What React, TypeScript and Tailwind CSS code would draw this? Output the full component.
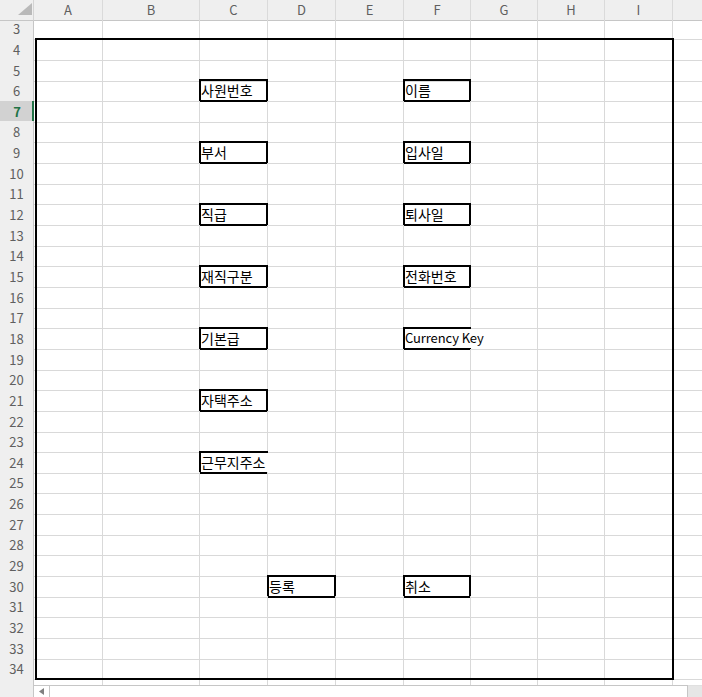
const COLS = ['A', 'B', 'C', 'D', 'E', 'F', 'G', 'H', 'I', 'J']

const LABELS: Record<string, { text: string; open?: boolean; latin?: boolean }> = {
  '6-C': { text: '사원번호' },
  '6-F': { text: '이름' },
  '9-C': { text: '부서' },
  '9-F': { text: '입사일' },
  '12-C': { text: '직급' },
  '12-F': { text: '퇴사일' },
  '15-C': { text: '재직구분' },
  '15-F': { text: '전화번호' },
  '18-C': { text: '기본급' },
  '18-F': { text: 'Currency Key', open: true, latin: true },
  '21-C': { text: '자택주소' },
  '24-C': { text: '근무지주소', open: true },
  '30-D': { text: '등록' },
  '30-F': { text: '취소' },
}

const gridCols = 'grid grid-cols-[34px_69px_97px_68px_68px_68px_67px_67px_67px_68px_68px]'

// gridline y of the bottom of row (k + 2)
const line = (k: number) => Math.round(17.2 + k * 20.65)

function heightClass(h: number) {
  if (h <= 20) return 'h-[20px]'
  if (h === 21) return 'h-[21px]'
  return 'h-[22px]'
}

function Corner() {
  return (
    <div className="relative border-b border-r border-b-[#c6c6c6] border-r-[#d4d4d4] bg-[#efefef]">
      <svg width="34" height="18" viewBox="0 0 34 18" className="absolute left-0 top-0">
        <polygon points="32,3 32,15 18,15" fill="#b9b9b9" />
      </svg>
    </div>
  )
}

function Row({ n, h }: { n: number; h: string }) {
  const selected = n === 7
  return (
    <div className={`${gridCols} ${h}`}>
      {selected ? (
        <div className="flex items-center justify-center border-b border-r-2 border-b-[#c6c6c6] border-r-[#217346] bg-[#d2d2d2] pt-px pl-[2px] text-[13px] font-semibold text-[#217346]">
          {n}
        </div>
      ) : (
        <div className="flex items-center justify-center border-b border-r border-b-[#d4d4d4] border-r-[#c6c6c6] bg-[#efefef] pt-px text-[13px] text-[#5f5f5f]">
          {n}
        </div>
      )}
      {COLS.map((c) => {
        const label = LABELS[`${n}-${c}`]
        return (
          <div
            key={c}
            className={`relative whitespace-nowrap border-b border-r border-b-[#d9d9d9] pl-px leading-[20px] text-black ${
              label?.latin ? 'text-[13px] tracking-[-0.1px]' : 'text-[14px]'
            } ${label?.open ? 'border-r-white' : 'border-r-[#d9d9d9]'}`}
          >
            {label && (
              <>
                {label.text}
                <div
                  className={`pointer-events-none absolute -inset-px border-2 border-black ${
                    label.open ? 'border-r-0' : ''
                  }`}
                />
              </>
            )}
          </div>
        )
      })}
    </div>
  )
}

export default function App() {
  const rows = Array.from({ length: 32 }, (_, i) => ({
    n: i + 3,
    h: heightClass(line(i + 1) - line(i)),
  }))

  return (
    <div className="relative h-[697px] w-[702px] overflow-hidden bg-white font-['Noto_Sans_CJK_KR','Noto_Sans',sans-serif]">
      <div className="relative w-[741px]">
        {/* column headers; J is scrolled off past the window edge */}
        <div className={`${gridCols} h-[18px]`}>
          <Corner />
          {COLS.map((c) => (
            <div
              key={c}
              className="flex items-center justify-center border-b border-r border-b-[#c6c6c6] border-r-[#dadada] bg-[#efefef] text-[13px] text-[#5f5f5f]"
            >
              {c === 'J' ? '' : c}
            </div>
          ))}
        </div>

        {rows.map((r) => (
          <Row key={r.n} n={r.n} h={r.h} />
        ))}

        {/* partially visible row 35 */}
        <div className={`${gridCols} h-[6px]`}>
          <div className="border-r border-r-[#c6c6c6] bg-[#efefef]" />
          {COLS.map((c) => (
            <div key={c} className="border-r border-r-[#d9d9d9]" />
          ))}
        </div>

        {/* thick outline around A4:I34 */}
        <div className="pointer-events-none absolute left-[35px] top-[38px] h-[642px] w-[639px] border-2 border-black" />
      </div>

      {/* horizontal scrollbar */}
      <div className="flex h-[12px] w-[702px]">
        <div className="w-[34px] border-r border-r-[#c6c6c6] bg-[#efefef]" />
        <div className="flex w-[16px] items-center justify-center border-r border-t border-[#c6c6c6] bg-white pl-px">
          <svg width="6" height="7" viewBox="0 0 6 7">
            <polygon points="5,0 5,7 0,3.5" fill="#808080" />
          </svg>
        </div>
        <div className="flex-1 border-r border-t border-[#c6c6c6] bg-white" />
        <div className="w-[14px] border-t border-[#e0e0e0] bg-[#e6e6e6]" />
      </div>
    </div>
  )
}
